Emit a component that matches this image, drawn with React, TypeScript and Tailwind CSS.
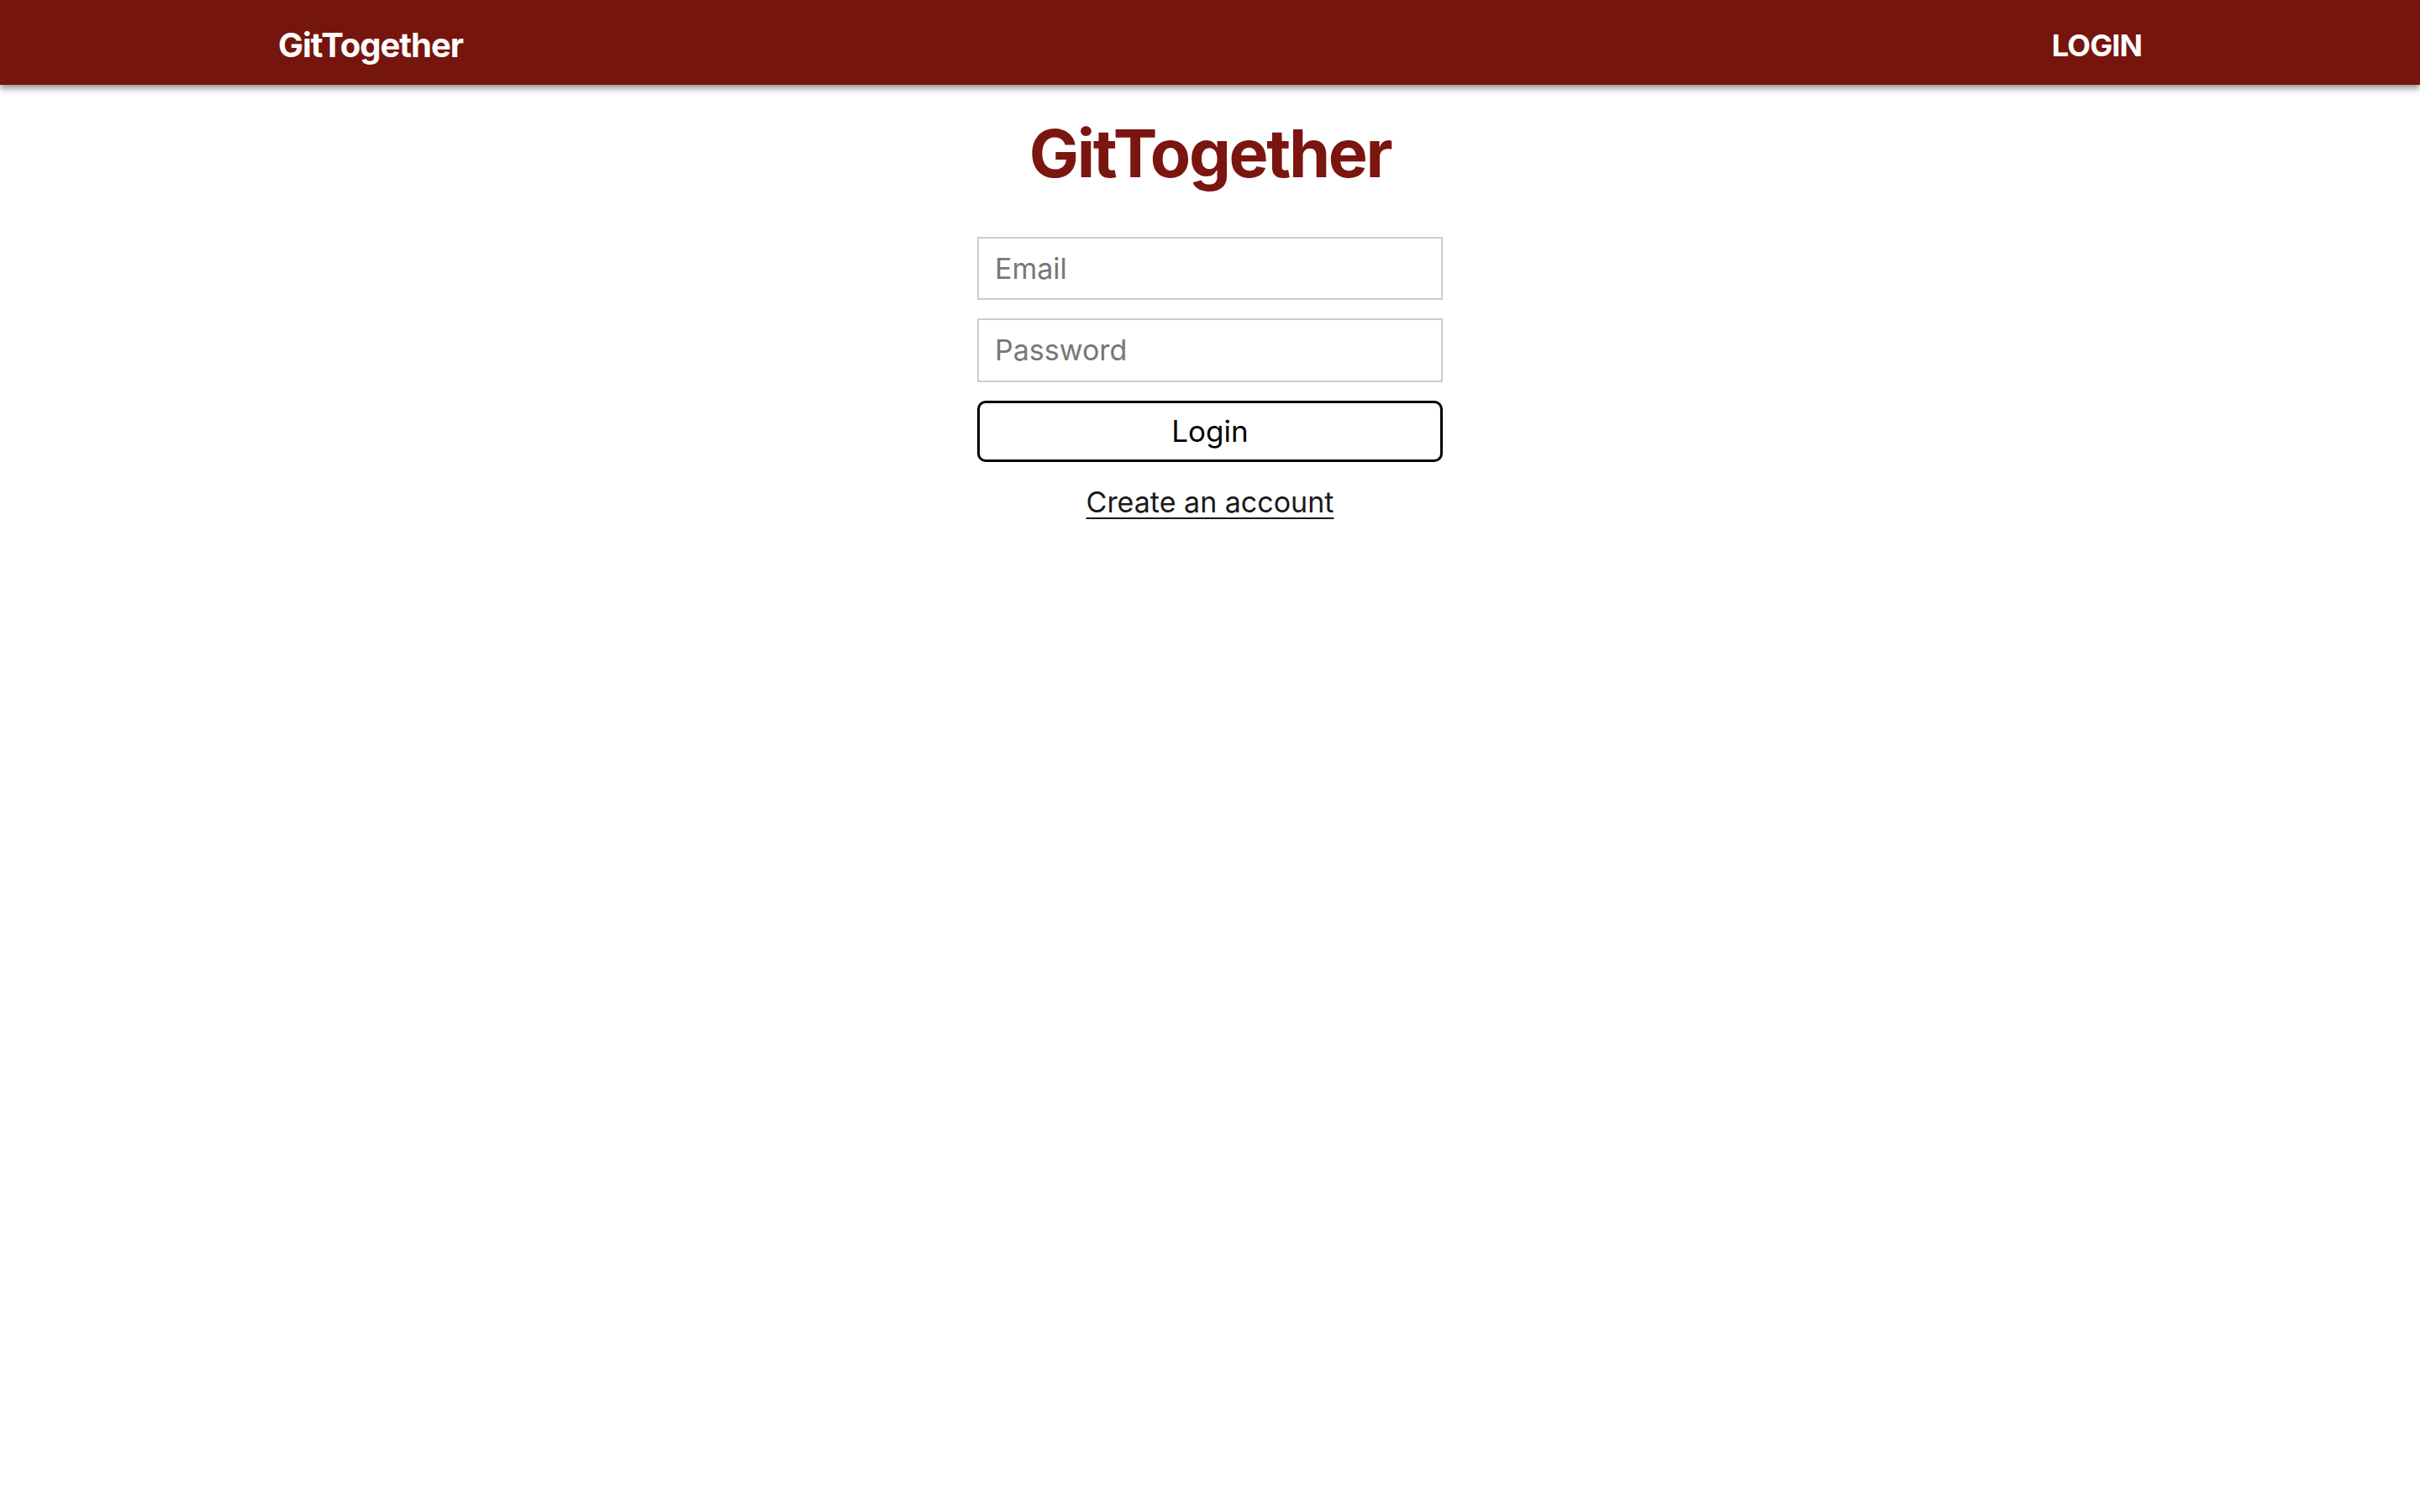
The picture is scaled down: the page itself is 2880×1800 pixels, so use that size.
import React from 'react';

const font = { fontFamily: 'Inter, "Noto Sans", sans-serif' };

const Navbar: React.FC = () => {
  return (
    <nav className="w-full h-[101px] bg-[#76150e] shadow-[0_4px_8px_rgba(0,0,0,0.45)] relative z-10">
      <div className="mx-auto w-[2218px] h-full flex items-center justify-between pt-[6px]">
        <a href="#" className="text-white text-[40px] font-bold tracking-tight">
          GitTogether
        </a>
        <a href="#" className="text-white text-[36px] font-bold tracking-tight">
          LOGIN
        </a>
      </div>
    </nav>
  );
};

const LoginForm: React.FC = () => {
  return (
    <div className="flex flex-col items-center">
      {/* Titulo */}
      <h1 className="mt-[34px] text-[79px] leading-[1.2] font-bold tracking-[-0.03em] text-[#7a1510]">GitTogether</h1>

      <form className="mt-[52px] w-[554px] flex flex-col gap-[22px]" onSubmit={(e) => e.preventDefault()}>
        <input
          type="email"
          placeholder="Email"
          className="h-[75px] w-full border-2 border-[#cccccc] px-[19px] text-[34px] text-black placeholder:text-[#777777] outline-none"
          style={font}
        />
        <input
          type="password"
          placeholder="Password"
          className="h-[76px] w-full border-2 border-[#cccccc] px-[19px] text-[34px] text-black placeholder:text-[#777777] outline-none"
          style={font}
        />
        <button
          type="submit"
          className="h-[73px] w-full border-[3px] border-black rounded-[10px] bg-white text-[35px] text-black"
          style={font}
        >
          Login
        </button>
      </form>

      <a href="#" className="mt-[22px] text-[34px] text-[#1a1a1a] underline underline-offset-[6px] decoration-2">
        Create an account
      </a>
    </div>
  );
};

export default function App() {
  return (
    <div className="min-h-screen bg-white" style={font}>
      <Navbar />
      <LoginForm />
    </div>
  );
}
